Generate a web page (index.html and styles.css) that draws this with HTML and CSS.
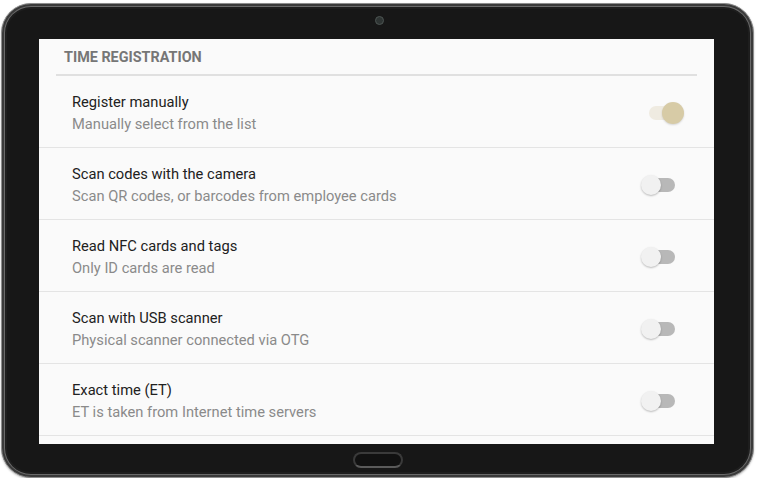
FILE: index.html
```html
<!DOCTYPE html>
<html>
<head>
<meta charset="utf-8">
<link rel="stylesheet" href="styles.css">
</head>
<body>
<div class="tablet">
  <div class="bezel-top"><span class="camera"></span></div>
  <div class="screen">
    <div class="section-header">TIME REGISTRATION</div>
    <div class="row">
      <div class="texts">
        <div class="title">Register manually</div>
        <div class="subtitle">Manually select from the list</div>
      </div>
      <div class="switch on"><span class="track"></span><span class="thumb"></span></div>
    </div>
    <div class="row">
      <div class="texts">
        <div class="title">Scan codes with the camera</div>
        <div class="subtitle">Scan QR codes, or barcodes from employee cards</div>
      </div>
      <div class="switch"><span class="track"></span><span class="thumb"></span></div>
    </div>
    <div class="row">
      <div class="texts">
        <div class="title">Read NFC cards and tags</div>
        <div class="subtitle">Only ID cards are read</div>
      </div>
      <div class="switch"><span class="track"></span><span class="thumb"></span></div>
    </div>
    <div class="row">
      <div class="texts">
        <div class="title">Scan with USB scanner</div>
        <div class="subtitle">Physical scanner connected via OTG</div>
      </div>
      <div class="switch"><span class="track"></span><span class="thumb"></span></div>
    </div>
    <div class="row last">
      <div class="texts">
        <div class="title">Exact time (ET)</div>
        <div class="subtitle">ET is taken from Internet time servers</div>
      </div>
      <div class="switch"><span class="track"></span><span class="thumb"></span></div>
    </div>
  </div>
  <div class="bezel-bottom"><span class="home"></span></div>
</div>
</body>
</html>
```
FILE: styles.css
```css
html, body {
  margin: 0;
  padding: 0;
  background: #ffffff;
  font-family: Roboto, "Liberation Sans", Arial, sans-serif;
}
.tablet {
  box-sizing: border-box;
  width: 753px;
  height: 475px;
  margin: 3px 0 0 1px;
  border-radius: 30px;
  background: #171717;
  border: 1px solid #8d8d8d;
  box-shadow: inset 0 0 0 2px #3a3a3a, inset 0 0 0 3px #6a6a6a, inset 0 0 0 5px #1e1e1e, 0 1px 2px rgba(0,0,0,0.25);
  padding: 0 39px 0 37px;
  display: flex;
  flex-direction: column;
}
.bezel-top {
  height: 35px;
}
.camera {
  display: block;
  width: 7px;
  height: 7px;
  border-radius: 50%;
  background: #2e3433;
  border: 1px solid #4d5553;
  margin: 12px 0 0 336px;
}
.screen {
  width: 675px;
  height: 405px;
  background: #fafafa;
  overflow: hidden;
}
.section-header {
  margin: 0 17px;
  padding: 8px 8px 5px;
  line-height: 22px;
  font-size: 14.4px;
  font-weight: 700;
  color: #767676;
  border-bottom: 2px solid #e0e0e0;
}
.row {
  display: flex;
  align-items: center;
  padding: 15px 0 12px 33px;
  border-bottom: 1px solid #e4e4e4;
}
.texts {
  flex: 1;
}
.title {
  font-size: 14.7px;
  line-height: 22px;
  color: #212121;
}
.subtitle {
  font-size: 14.7px;
  line-height: 22px;
  color: #8a8a8a;
}
.switch {
  position: relative;
  width: 34px;
  height: 20px;
  margin-right: 39px;
}
.switch .track {
  position: absolute;
  left: 3px;
  top: 3px;
  width: 31px;
  height: 14px;
  border-radius: 7px;
  background: #b8b8b8;
}
.switch .thumb {
  position: absolute;
  left: 0;
  top: 0;
  width: 20px;
  height: 20px;
  border-radius: 50%;
  background: #f1f1f1;
  box-shadow: 0 1px 2px rgba(0,0,0,0.25);
}
.switch.on {
  margin-right: 31px;
}
.switch.on .track {
  left: 0;
  background: #efebe1;
}
.switch.on .thumb {
  left: 13px;
  top: -1px;
  width: 22px;
  height: 22px;
  background: #d7cba6;
  box-shadow: 0 1px 2px rgba(0,0,0,0.15);
}
.bezel-bottom {
  flex: 1;
  display: flex;
  align-items: flex-start;
}
.home {
  display: block;
  box-sizing: border-box;
  width: 50px;
  height: 16px;
  border-radius: 8px;
  border: 2px solid #3a3a3a;
  border-bottom-color: #5a5a5a;
  background: #111111;
  margin: 8px 0 0 314px;
}
```
